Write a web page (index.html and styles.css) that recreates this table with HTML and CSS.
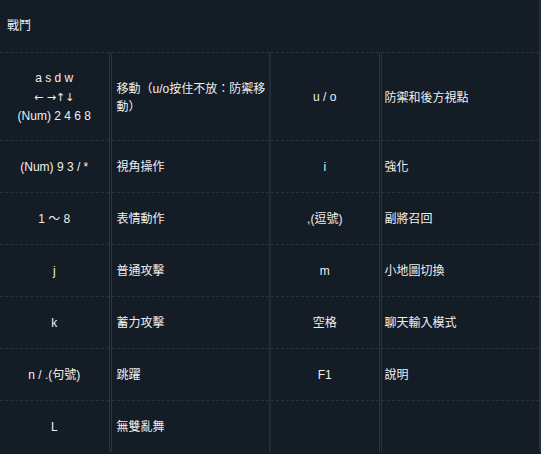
FILE: index.html
```html
<!DOCTYPE html>
<html>
<head>
<meta charset="utf-8">
<link rel="stylesheet" href="styles.css">
</head>
<body>
<table class="keys">
<colgroup><col class="c-key"><col class="c-act"><col class="c-key"><col class="c-act2"></colgroup>
<tr class="head"><td colspan="4">戰鬥</td></tr>
<tr class="tall">
<td class="k">a s d w<br><span class="arr">← →↑↓</span><br>(Num) 2 4 6 8</td>
<td class="a">移動（u/o按住不放：防禦移動）</td>
<td class="k">u / o</td>
<td class="a last">防禦和後方視點</td>
</tr>
<tr><td class="k">(Num) 9 3 / *</td><td class="a">視角操作</td><td class="k">i</td><td class="a last">強化</td></tr>
<tr><td class="k">1 ～ 8</td><td class="a">表情動作</td><td class="k">,(逗號)</td><td class="a last">副將召回</td></tr>
<tr><td class="k">j</td><td class="a">普通攻擊</td><td class="k">m</td><td class="a last">小地圖切換</td></tr>
<tr><td class="k">k</td><td class="a">蓄力攻擊</td><td class="k">空格</td><td class="a last">聊天輸入模式</td></tr>
<tr><td class="k">n / .(句號)</td><td class="a">跳躍</td><td class="k">F1</td><td class="a last">說明</td></tr>
<tr><td class="k">L</td><td class="a">無雙亂舞</td><td class="k"></td><td class="a last"></td></tr>
</table>
</body>
</html>
```
FILE: styles.css
```css
html, body {
  margin: 0;
  padding: 0;
  background: #141c26;
}
body {
  font-family: "Liberation Sans", "Noto Sans CJK TC", sans-serif;
  font-size: 12px;
  color: #f0f0f0;
}
.keys {
  width: 540px;
  table-layout: fixed;
  border-collapse: collapse;
  border-spacing: 0;
}
.c-key { width: 110px; }
.c-act { width: 160px; }
.c-act2 { width: 160px; }
.keys td {
  padding: 0;
  height: 51px;
  border-top: 1px dashed #28323d;
  vertical-align: middle;
  line-height: 18px;
}
.keys tr.head td {
  border-top: none;
  height: 52px;
  padding-left: 7px;
  border-right: 2px solid #222c37;
}
.keys tr.tall td { height: 84px; padding-top: 3px; }
.keys tr.tall td.k { line-height: 19px; height: 85px; padding-top: 2px; }
.arr {
  font-family: "DejaVu Sans", sans-serif;
  font-size: 11px;
}
.keys td.k {
  text-align: center;
  border-right: 3px double #2a3440;
}
.keys td.a {
  padding-left: 5px;
  padding-right: 0;
  border-right: 2px solid #222c37;
}
.keys td.a.last {
  padding-left: 3px;
  border-right: 2px solid #27313c;
}
```
